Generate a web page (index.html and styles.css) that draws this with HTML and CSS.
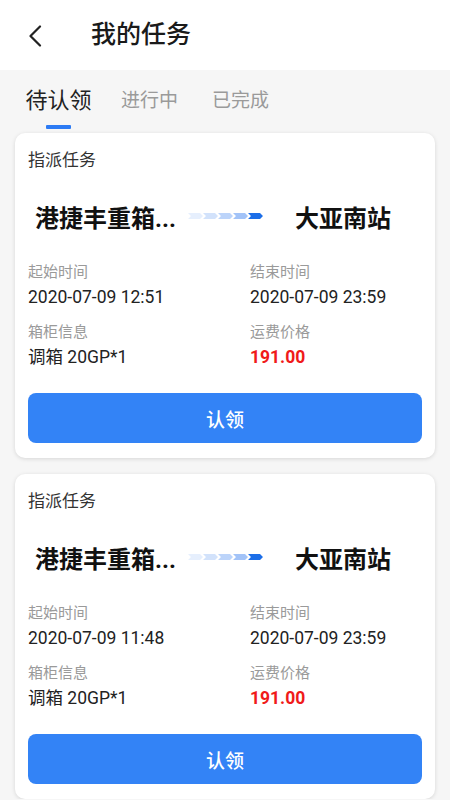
FILE: index.html
```html
<!DOCTYPE html>
<html lang="zh-CN">
<head>
<meta charset="utf-8">
<title>我的任务</title>
<link rel="stylesheet" href="styles.css">
</head>
<body>
<header class="topbar">
  <span class="back">
    <svg width="16" height="22" viewBox="0 0 16 22"><path d="M13 1.5 L3.5 11 L13 20.5" fill="none" stroke="#222" stroke-width="2.2" stroke-linecap="round" stroke-linejoin="round"/></svg>
  </span>
  <h1 class="title">我的任务</h1>
</header>
<nav class="tabs">
  <div class="tab active">待认领<span class="bar"></span></div>
  <div class="tab">进行中</div>
  <div class="tab">已完成</div>
</nav>
<main class="list">
  <section class="card">
    <div class="kind">指派任务</div>
    <div class="route">
      <div class="from">港捷丰重箱...</div>
      <svg class="arrow" width="75" height="6" viewBox="0 0 75 6">
        <polygon points="0,0 12,0 15,3 12,6 0,6 3,3" fill="#e6effd"/>
        <polygon points="15,0 27,0 30,3 27,6 15,6 18,3" fill="#d2e2fb"/>
        <polygon points="30,0 42,0 45,3 42,6 30,6 33,3" fill="#bcd4fa"/>
        <polygon points="45,0 57,0 60,3 57,6 45,6 48,3" fill="#a2c3f8"/>
        <polygon points="60,0 72,0 75,3 72,6 60,6 63,3" fill="#1c6ee8"/>
      </svg>
      <div class="to">大亚南站</div>
    </div>
    <div class="info">
      <div class="cell"><div class="label">起始时间</div><div class="value">2020-07-09 12:51</div></div>
      <div class="cell"><div class="label">结束时间</div><div class="value">2020-07-09 23:59</div></div>
      <div class="cell row2"><div class="label">箱柜信息</div><div class="value">调箱 20GP*1</div></div>
      <div class="cell row2"><div class="label">运费价格</div><div class="value price">191.00</div></div>
    </div>
    <button class="claim">认领</button>
  </section>
  <section class="card">
    <div class="kind">指派任务</div>
    <div class="route">
      <div class="from">港捷丰重箱...</div>
      <svg class="arrow" width="75" height="6" viewBox="0 0 75 6">
        <polygon points="0,0 12,0 15,3 12,6 0,6 3,3" fill="#e6effd"/>
        <polygon points="15,0 27,0 30,3 27,6 15,6 18,3" fill="#d2e2fb"/>
        <polygon points="30,0 42,0 45,3 42,6 30,6 33,3" fill="#bcd4fa"/>
        <polygon points="45,0 57,0 60,3 57,6 45,6 48,3" fill="#a2c3f8"/>
        <polygon points="60,0 72,0 75,3 72,6 60,6 63,3" fill="#1c6ee8"/>
      </svg>
      <div class="to">大亚南站</div>
    </div>
    <div class="info">
      <div class="cell"><div class="label">起始时间</div><div class="value">2020-07-09 11:48</div></div>
      <div class="cell"><div class="label">结束时间</div><div class="value">2020-07-09 23:59</div></div>
      <div class="cell row2"><div class="label">箱柜信息</div><div class="value">调箱 20GP*1</div></div>
      <div class="cell row2"><div class="label">运费价格</div><div class="value price">191.00</div></div>
    </div>
    <button class="claim">认领</button>
  </section>
</main>
</body>
</html>
```
FILE: styles.css
```css
* { box-sizing: border-box; }
html, body { margin: 0; padding: 0; }
body {
  background: #f6f6f6;
  font-family: Roboto, "Noto Sans CJK SC", "Noto Sans", sans-serif;
  color: #222;
  width: 450px;
}
.topbar {
  height: 70px;
  background: #fff;
  display: flex;
  align-items: center;
  padding-left: 27px;
}
.back { display: flex; width: 16px; height: 22px; margin-top: 1px; }
.title {
  margin: 0 0 0 48px;
  font-size: 25px;
  font-weight: 500;
  color: #1a1a1a;
  line-height: 30px;
}
.tabs {
  display: flex;
  height: 63px;
  padding-left: 13px;
}
.tab {
  position: relative;
  width: 91px;
  text-align: center;
  font-size: 19px;
  color: #9a9a9a;
  line-height: 28px;
  padding-top: 17px;
}
.tab.active { font-size: 22px; color: #222; }
.bar {
  position: absolute;
  left: 33px;
  top: 55px;
  width: 25px;
  height: 4px;
  border-radius: 1px;
  background: #2d7bf4;
}
.list {
  display: flex;
  flex-direction: column;
  gap: 16px;
  padding: 0 15px;
}
.card {
  background: #fff;
  border-radius: 10px;
  box-shadow: 0 1px 4px rgba(0,0,0,0.13);
  padding: 14px 13px 15px;
}
.kind {
  font-size: 17px;
  line-height: 26px;
  color: #333;
}
.route {
  display: flex;
  align-items: center;
  height: 40px;
  margin-top: 23px;
  padding-left: 7px;
}
.from, .to {
  font-size: 24px;
  font-weight: 700;
  color: #111;
  white-space: nowrap;
}
.from { width: 153px; overflow: hidden; }
.arrow { flex: none; }
.to { margin-left: 32px; }
.info {
  display: grid;
  grid-template-columns: 222px 1fr;
  margin-top: 25px;
}
.row2 { margin-top: 10px; }
.label {
  font-size: 15px;
  line-height: 22px;
  color: #9a9a9a;
}
.value {
  font-size: 17.5px;
  line-height: 28px;
  color: #222;
}
.price { color: #f01a1a; font-weight: 700; }
.claim {
  display: block;
  width: 100%;
  height: 50px;
  margin-top: 22px;
  border: 0;
  border-radius: 8px;
  background: #3383f6;
  color: #fff;
  font-family: inherit;
  font-size: 19px;
  font-weight: 500;
}
```
